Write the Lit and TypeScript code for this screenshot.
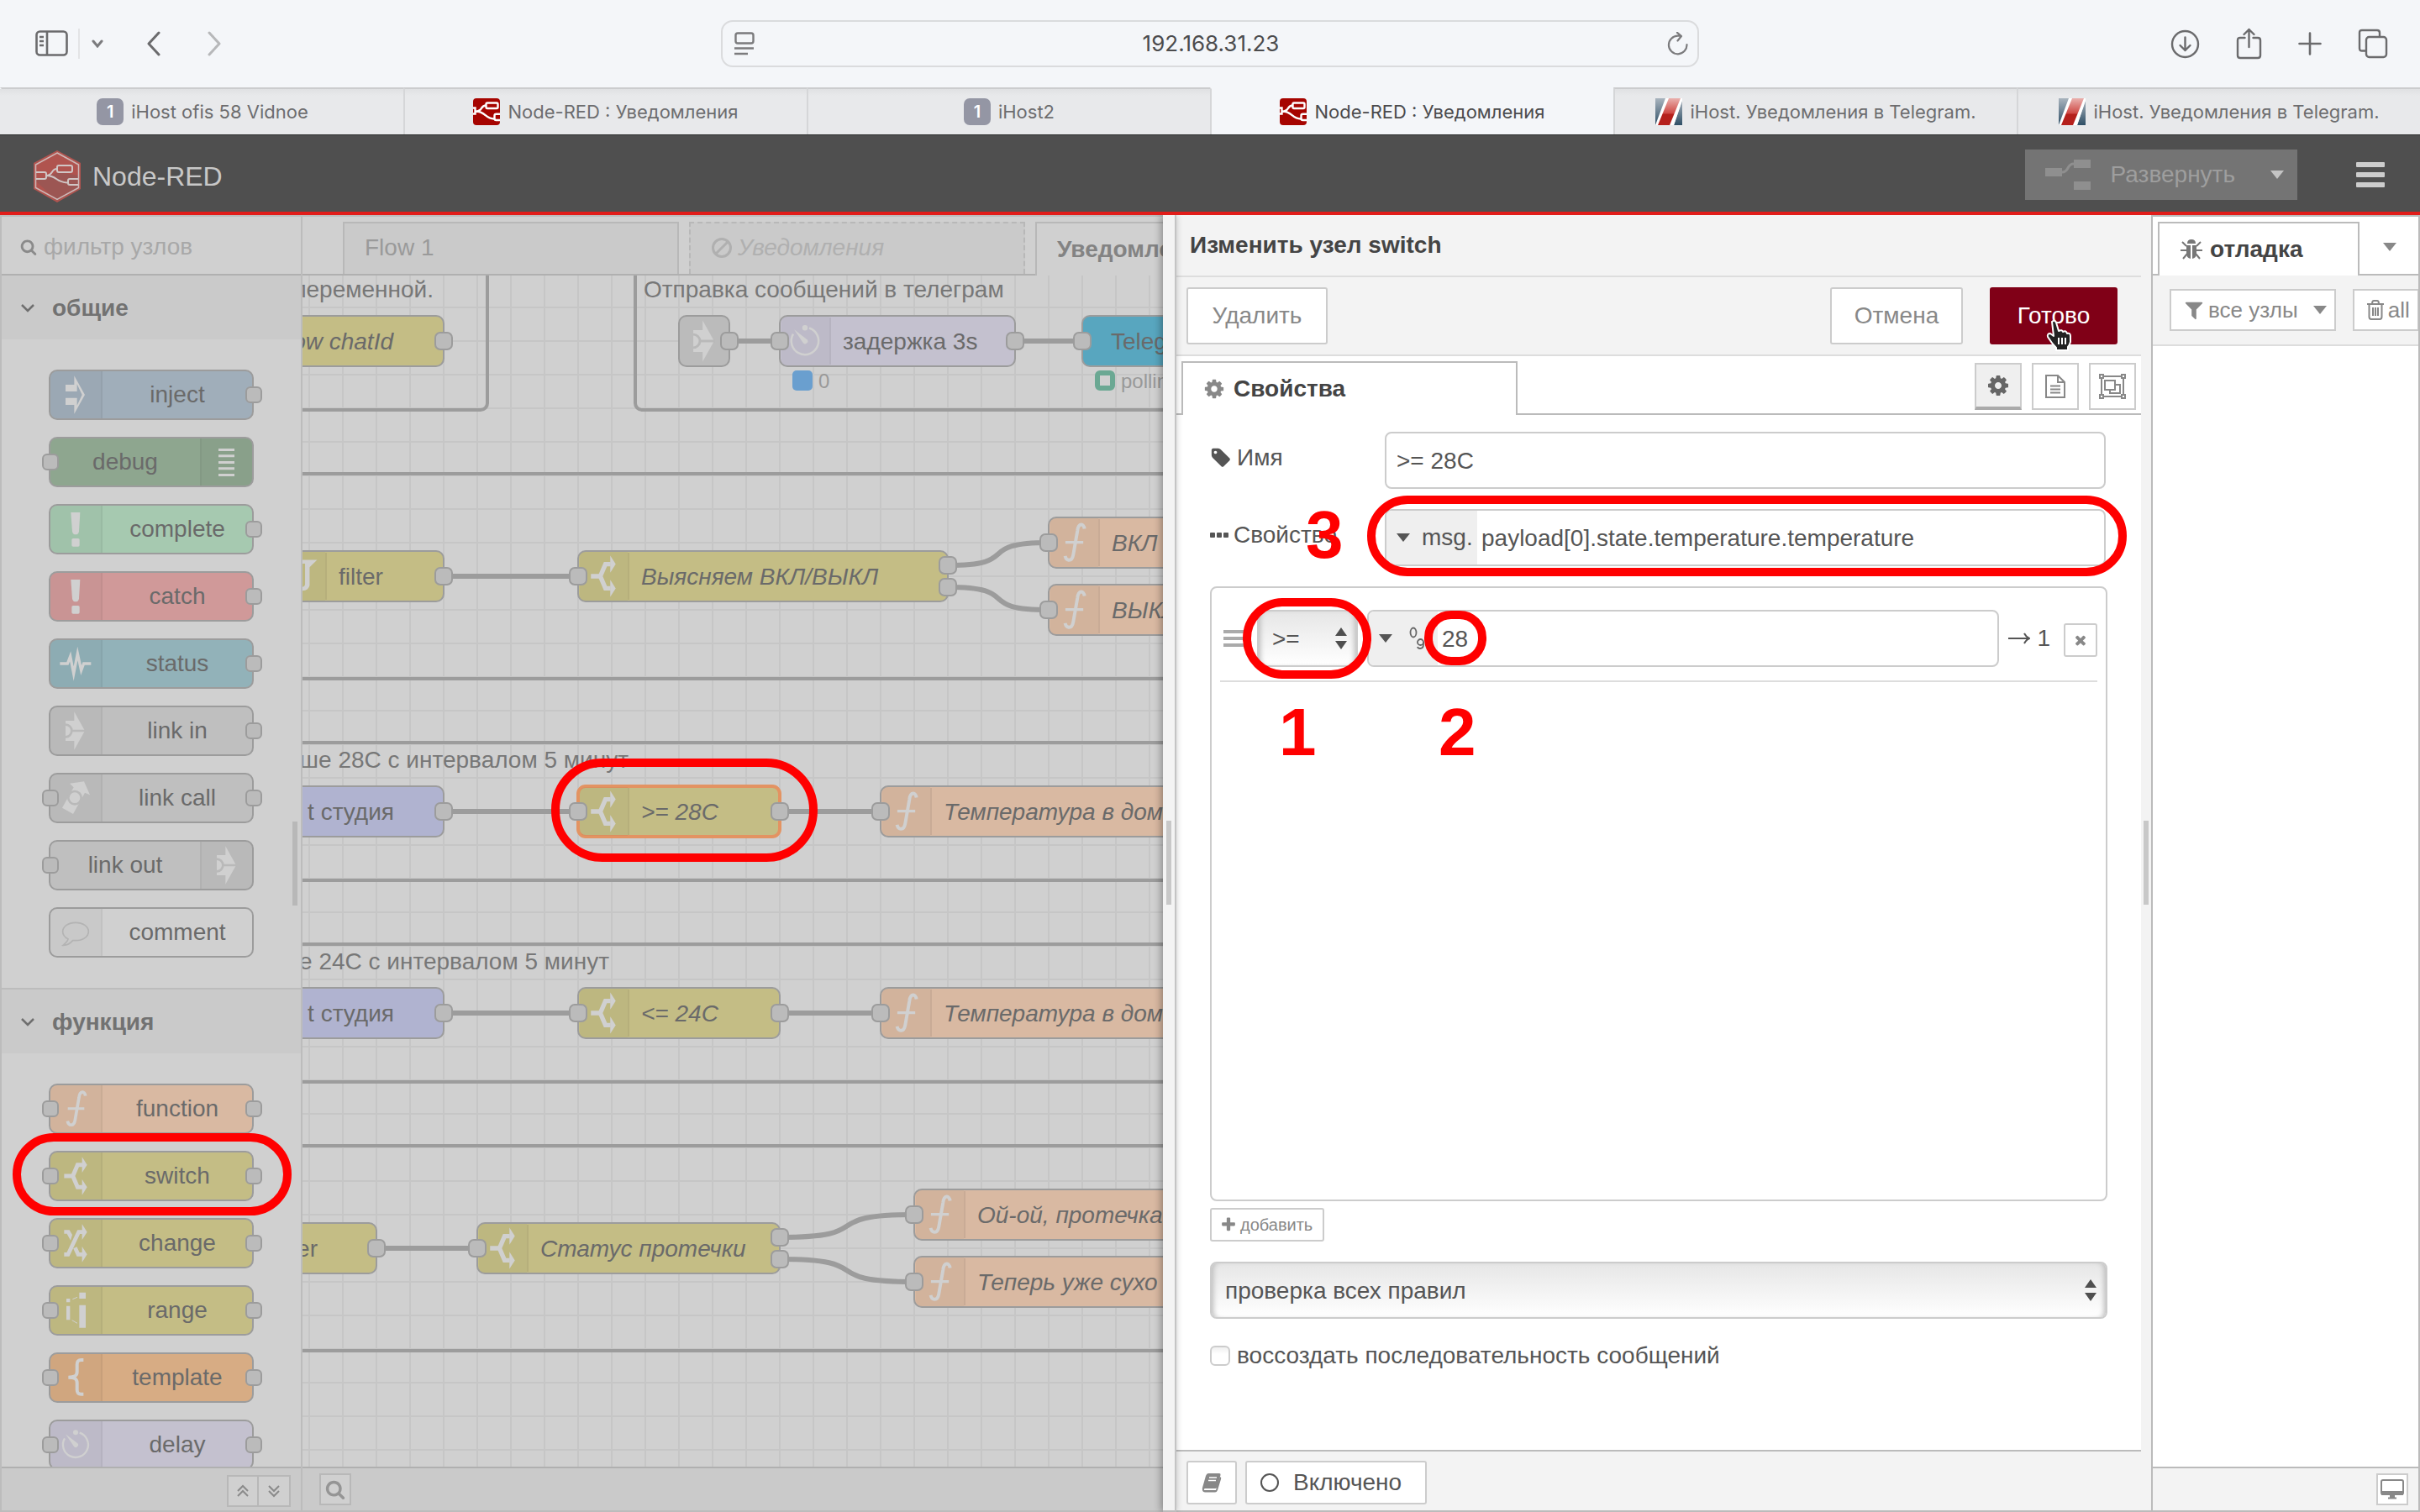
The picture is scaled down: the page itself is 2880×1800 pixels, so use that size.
import { LitElement, html, svg, css, nothing } from "lit";
import { customElement, property } from "lit/decorators.js";

const NODE_ICONS: Record<string, unknown> = {
  inject: svg`<path fill="#d0d0d0" fill-rule="evenodd" d="M-36-36H-5V-68L33 0L-5 68V36H-36V11H5V38L23 0L5-38V-12H-36Z"/>`,
  debug: svg`<path fill="#d0d0d0" d="M-30-48h57v9h-57zM-30-26h57v9h-57zM-30-3h57v9h-57zM-30 19h57v9h-57zM-30 42h57v9h-57z"/>`,
  alert: svg`<path fill="#d0d0d0" d="M-17-60H16L12 8Q10 19 0 19Q-10 19-12 8Z"/><rect fill="#d0d0d0" x="-14" y="33" width="28" height="29" rx="5"/>`,
  status: svg`<path fill="none" stroke="#d0d0d0" stroke-width="10" stroke-miterlimit="20" d="M-56 0H-29L-19-26L-7 36L7-36L20 24L29 0H55"/>`,
  link: svg`<path fill="#d0d0d0" d="M-5-68L33 0L-5 68V36H-36V-36H-5Z"/><path fill="none" stroke="#b9b9b9" stroke-width="8" d="M-36-22A22 22 0 0 1-36 22M-12 0H36"/>`,
  call: svg`<path fill="#d0d0d0" d="M-21-52L30-59L51-11L33-19L-9 57L-48 35L-7-38Z"/><circle cx="-3" cy="-1" r="23" fill="none" stroke="#b9b9b9" stroke-width="8"/>`,
  comment: svg`<path fill="none" stroke="#b3b3b3" stroke-width="5" d="M0-35C26-35 46-21 46-3S26 29 0 29L-10 29C-18 38-32 47-45 46C-38 40-27 30-27 23C-40 17-46 6-46-3C-46-21-26-35 0-35Z"/>`,
  function: svg`<path fill="none" stroke="#d0d0d0" stroke-width="11" d="M35-46C33-64 15-66 12-40L-2 40C-6 64-25 62-29 44"/><path stroke="#d0d0d0" stroke-width="9" d="M-28-1H31"/>`,
  switch: svg`<path fill="none" stroke="#d0d0d0" stroke-width="15" d="M-41 0H-10M24-40H7L-10 0L7 40H24"/><path fill="#d0d0d0" d="M23-68L41-40L23-12ZM23 12L41 40L23 68Z"/>`,
  change: svg`<path fill="none" stroke="#d0d0d0" stroke-width="14" d="M-41 40H-27L11-40H24M-2 16L9 40H24"/><path fill="#d0d0d0" d="M-41-47H-22L-12-30L-18-10L-31-34H-41ZM23-68L41-40L23-12ZM23 12L41 40L23 68Z"/>`,
  range: svg`<path fill="#d0d0d0" d="M-33-42h13v13h-13zM-33-16h13v50h-13zM13-64h23v22h-23zM13-19h23v81h-23z"/><path stroke="#d0d0d0" stroke-width="3" d="M-11-40L6-47M-13 35L6 46"/>`,
  template: svg`<path fill="none" stroke="#d0d0d0" stroke-width="12" d="M28-63H20C8-63 5-57 5-46V-20C5-6-4-1-26-1C-4-1 5 4 5 18V42C5 54 8 59 20 59H28"/>`,
  delay: svg`<path fill="none" stroke="#d0d0d0" stroke-width="7" d="M14-43A45 45 0 1 1-39-23"/><circle cx="0" cy="-44" r="9" fill="#d0d0d0"/><path fill="#d0d0d0" d="M-36-38L7-5A8 8 0 0 1-6 6Z"/>`,
  filter: svg`<path fill="#d0d0d0" d="M-50-54H54L29-30V30Q26 48 4 48V36Q14 34 14 26V-42H-50Z"/>`,
};

const FA: Record<string, string> = {
  cog: "M1152 896q0-106-75-181t-181-75-181 75-75 181 75 181 181 75 181-75 75-181zm512-109v222q0 12-8 23t-20 13l-185 28q-19 54-39 91 35 50 107 138 10 12 10 25t-9 23q-27 37-99 108t-94 71q-12 0-26-9l-138-108q-44 23-91 38-16 136-29 186-7 28-36 28h-222q-14 0-24.5-8.5t-11.5-21.5l-28-184q-49-16-90-37l-141 107q-10 9-25 9-14 0-25-11-126-114-165-168-7-10-7-23 0-12 8-23 15-21 51-66.5t54-70.5q-27-50-41-99l-183-27q-13-2-21-12.5t-8-23.5v-222q0-12 8-23t19-13l186-28q14-46 39-92-40-57-107-138-10-12-10-24 0-10 9-23 26-36 98.5-107.5t94.5-71.5q13 0 26 10l138 107q44-23 91-38 16-136 29-186 7-28 36-28h222q14 0 24.5 8.5t11.5 21.5l28 184q49 16 90 37l142-107q9-9 24-9 13 0 25 10 129 119 165 170 7 8 7 22 0 12-8 23-15 21-51 66.5t-54 70.5q26 50 41 98l183 28q13 2 21 12.5t8 23.5z",
  search: "M1216 832q0-185-131.5-316.5t-316.5-131.5-316.5 131.5-131.5 316.5 131.5 316.5 316.5 131.5 316.5-131.5 131.5-316.5zm512 832q0 52-38 90t-90 38q-54 0-90-38l-343-342q-179 124-399 124-143 0-273.5-55.5t-225-150-150-225-55.5-273.5 55.5-273.5 150-225 225-150 273.5-55.5 273.5 55.5 225 150 150 225 55.5 273.5q0 220-124 399l343 343q37 37 37 90z",
  tag: "M576 448q0-53-37.5-90.5t-90.5-37.5-90.5 37.5-37.5 90.5 37.5 90.5 90.5 37.5 90.5-37.5 37.5-90.5zm1067 576q0 53-37 90l-491 492q-39 37-91 37-53 0-90-37l-715-716q-38-37-64.5-101t-26.5-117v-416q0-52 38-90t90-38h416q53 0 117 26.5t102 64.5l715 714q37 39 37 91z",
  filter: "M1595 295q17 41-14 70l-493 493v742q0 42-39 59-13 5-25 5-27 0-45-19l-256-256q-19-19-19-45v-486l-493-493q-31-29-14-70 17-39 59-39h1280q42 0 59 39z",
  plus: "M1600 736v192q0 40-28 68t-68 28h-416v416q0 40-28 68t-68 28h-192q-40 0-68-28t-28-68v-416h-416q-40 0-68-28t-28-68v-192q0-40 28-68t68-28h416v-416q0-40 28-68t68-28h192q40 0 68 28t28 68v416h416q40 0 68 28t28 68z",
  times: "M1490 1322q0 40-28 68l-136 136q-28 28-68 28t-68-28l-294-294-294 294q-28 28-68 28t-68-28l-136-136q-28-28-28-68t28-68l294-294-294-294q-28-28-28-68t28-68l136-136q28-28 68-28t68 28l294 294 294-294q28-28 68-28t68 28l136 136q28 28 28 68t-28 68l-294 294 294 294q28 28 28 68z",
};

const fa = (name: string, size: number) =>
  html`<svg class="ico" width=${size} height=${size} viewBox="0 0 1792 1792" fill="currentColor" aria-hidden="true"><path d=${FA[name]}></path></svg>`;

const caret = () =>
  html`<svg class="ico" width="16" height="10" viewBox="0 0 16 10" fill="currentColor" aria-hidden="true"><path d="M0 0H16L8 10Z"/></svg>`;

const updown = () =>
  html`<svg class="updown" width="14" height="26" viewBox="0 0 14 26" fill="#4f4f4f" aria-hidden="true"><path d="M7 0L14 10H0ZM0 16H14L7 26Z"/></svg>`;

const baseStyles = css`
  * { box-sizing: border-box; }
  button, input, select { font: inherit; color: inherit; margin: 0; padding: 0; border: 0; background: none; border-radius: 0; outline: none; }
  svg { display: block; flex: none; }
  p, h1, h2, ul, ol { margin: 0; padding: 0; font: inherit; list-style: none; }
`;

interface Tab { icon: string; title: string; active?: boolean }

@customElement("browser-chrome")
export class BrowserChrome extends LitElement {
  static styles = [baseStyles, css`
    :host { display: block; background: #f4f6f9; color: #6b6b6d; font-family: Inter, "Noto Sans", sans-serif; }
    .bar { display: grid; grid-template-columns: 1fr 1164px 1fr; height: 104px; align-items: center; }
    .left { display: flex; align-items: center; padding-left: 42px; }
    .left .rule { width: 2px; height: 36px; background: #e3e4e6; margin: 0 14px 0 12px; }
    .left .back { margin: 0 56px 0 52px; }
    .address { display: flex; align-items: center; height: 56px; padding: 0 10px 0 14px; border: 2px solid #dadbdd; border-radius: 14px; }
    .address input { flex: 1; min-width: 0; text-align: center; font-size: 26px; color: #4b4b4d; }
    .right { display: flex; justify-content: flex-end; align-items: center; gap: 43px; padding-right: 38px; }
    .tabs { display: grid; grid-template-columns: repeat(6, 1fr); height: 56px; }
    .tab { display: flex; align-items: center; justify-content: center; gap: 9px; font-size: 22px; color: #6d6d6f; text-decoration: none; white-space: nowrap;
      background: linear-gradient(#e0e1e3, #e8e9eb 8px); border-top: 2px solid #cbccce; border-left: 2px solid #d5d6d8; }
    .tab:first-child { border-left-color: transparent; }
    .tab.active { background: #f4f6f9; border-top-color: transparent; color: #4b4b4d; }
    .one { width: 32px; height: 32px; border-radius: 7px; background: #9496a4; color: #fff; display: grid; place-items: center; font-size: 20px; font-weight: 600; }
  `];

  private tabs: Tab[] = [
    { icon: "one", title: "iHost ofis 58 Vidnoe" },
    { icon: "red", title: "Node-RED : Уведомления" },
    { icon: "one", title: "iHost2" },
    { icon: "red", title: "Node-RED : Уведомления", active: true },
    { icon: "stripe", title: "iHost. Уведомления в Telegram." },
    { icon: "stripe", title: "iHost. Уведомления в Telegram." },
  ];

  private favicon(kind: string) {
    if (kind === "one") return html`<span class="one">1</span>`;
    if (kind === "red") return html`<svg width="32" height="32" viewBox="0 0 32 32"><rect width="32" height="32" rx="4" fill="#a60400"/>
      <g fill="none" stroke="#fff" stroke-width="2.4"><path d="M0 11.500H2.500V18.500H0M3 15.500C12 15.500 8 8.500 15.500 8.500M3 15.500C15 15.500 14 24 25 24.500"/><rect x="15.500" y="5.500" width="14" height="6.500" rx="1.500"/><path d="M32 18.800H27.500Q25.500 18.800 25.500 20.500V24Q25.500 26 27.500 26H32"/></g></svg>`;
    return html`<svg width="32" height="32" viewBox="0 0 32 32"><defs><linearGradient id="sr" x1="0" y1="0" x2="0" y2="1"><stop offset="0" stop-color="#eab1ae"/><stop offset=".55" stop-color="#cf4a46"/><stop offset=".6" stop-color="#b5201c"/><stop offset="1" stop-color="#b5201c"/></linearGradient>
      <linearGradient id="sb" x1="0" y1="0" x2="0" y2="1"><stop offset="0" stop-color="#a9b4be"/><stop offset="1" stop-color="#2f4f66"/></linearGradient></defs>
      <path fill="url(#sb)" d="M0 0H13L2 32H0Z"/><path fill="url(#sb)" d="M32 2V32H22Z"/><path fill="#fff" d="M12 0H32V3L22 32H0Z"/><path fill="url(#sr)" d="M16 0H30L17 32H3Z"/></svg>`;
  }

  render() {
    return html`
      <div class="bar">
        <div class="left">
          <button aria-label="Боковая панель"><svg width="39" height="32" viewBox="0 0 39 32" fill="none" stroke="#6b6b6d" stroke-width="2.600"><rect x="1.500" y="1.500" width="36" height="28" rx="4"/><path d="M14 1.500V29.500M5 8H10M5 13H10M5 18H10"/></svg></button>
          <span class="rule"></span>
          <button aria-label="Меню"><svg width="14" height="10" viewBox="0 0 14 10" fill="none" stroke="#7b7b7e" stroke-width="3" stroke-linecap="round"><path d="M2 2L7 8L12 2"/></svg></button>
          <button class="back" aria-label="Назад"><svg width="16" height="30" viewBox="0 0 16 30" fill="none" stroke="#6b6b6d" stroke-width="3" stroke-linecap="round" stroke-linejoin="round"><path d="M14 2L2 15L14 28"/></svg></button>
          <button aria-label="Вперёд"><svg width="16" height="30" viewBox="0 0 16 30" fill="none" stroke="#b7b8ba" stroke-width="3" stroke-linecap="round" stroke-linejoin="round"><path d="M2 2L14 15L2 28"/></svg></button>
        </div>
        <div class="address">
          <svg width="24" height="28" viewBox="0 0 24 28" fill="none" stroke="#7b7b7d" stroke-width="2.400"><rect x="1.500" y="1.500" width="21" height="12" rx="2.500"/><path d="M0 19.500H23M0 26H16"/></svg>
          <input type="text" aria-label="Адрес" value="192.168.31.23">
          <button aria-label="Обновить"><svg width="26" height="28" viewBox="0 0 26 28" fill="none" stroke="#7b7b7d" stroke-width="2.200" stroke-linecap="round" stroke-linejoin="round"><path d="M23.500 15A10.800 10.800 0 1 1 12.700 4.700H16M12 .8L17 5L12.500 10.500"/></svg></button>
        </div>
        <div class="right">
          <button aria-label="Загрузки"><svg width="35" height="35" viewBox="0 0 35 35" fill="none" stroke="#6b6b6d" stroke-width="2.400" stroke-linecap="round" stroke-linejoin="round"><circle cx="17.500" cy="17.500" r="15.500"/><path d="M17.500 9.500V25M11.500 19L17.500 25L23.500 19"/></svg></button>
          <button aria-label="Поделиться"><svg width="31" height="38" viewBox="0 0 31 38" fill="none" stroke="#6b6b6d" stroke-width="2.400" stroke-linecap="round" stroke-linejoin="round"><path d="M10.500 12H5Q2 12 2 15V33Q2 36 5 36H26Q29 36 29 33V15Q29 12 26 12H20.500M15.500 23V2M9.500 8L15.500 2L21.500 8"/></svg></button>
          <button aria-label="Новая вкладка"><svg width="28" height="28" viewBox="0 0 28 28" stroke="#6b6b6d" stroke-width="2.600" stroke-linecap="round"><path d="M14 1.500V26.500M1.500 14H26.500"/></svg></button>
          <button aria-label="Обзор вкладок"><svg width="36" height="36" viewBox="0 0 36 36" fill="none" stroke="#6b6b6d" stroke-width="2.400"><path d="M10 26.500H5Q2 26.500 2 23.500V5Q2 2 5 2H23Q26 2 26 5V10"/><rect x="10" y="10" width="24" height="24" rx="3.500"/></svg></button>
        </div>
      </div>
      <nav class="tabs">
        ${this.tabs.map(t => html`<a href="#" class="tab ${t.active ? "active" : ""}">${this.favicon(t.icon)}<span>${t.title}</span></a>`)}
      </nav>`;
  }
}

interface PaletteNode { label: string; icon: string; color: string; in?: boolean; out?: boolean; right?: boolean; marked?: boolean }

@customElement("palette-node")
export class PaletteNodeElement extends LitElement {
  @property({ attribute: false }) node!: PaletteNode;

  static styles = [baseStyles, css`
    :host { display: block; position: relative; margin: 0 56px; }
    .node { display: flex; height: 60px; border: 2px solid #9c9c9c; border-radius: 10px; overflow: hidden; color: #6a6a6a; }
    .node.right { flex-direction: row-reverse; }
    .icon { width: 62px; background: rgba(0, 0, 0, .03); border-right: 2px solid rgba(0, 0, 0, .04); display: grid; place-items: center; }
    .right .icon { border-right: 0; border-left: 2px solid rgba(0, 0, 0, .04); }
    .label { flex: 1; display: grid; place-items: center; }
    .port { position: absolute; top: 20px; width: 20px; height: 20px; border: 2px solid #9c9c9c; border-radius: 6px; background: #bbb; }
    .port.in { left: -8px; }
    .port.out { right: -10px; }
    .ring { position: absolute; inset: -21px -45px -17px -43px; border: 10px solid #f00; border-radius: 49px; z-index: 2; }
  `];

  render() {
    const n = this.node;
    return html`
      <div class="node ${n.right ? "right" : ""}" style="background:${n.color}">
        <span class="icon"><svg width="56" height="56" viewBox="-84 -84 168 168">${NODE_ICONS[n.icon]}</svg></span>
        <span class="label">${n.label}</span>
      </div>
      ${n.in ? html`<span class="port in"></span>` : nothing}
      ${n.out ? html`<span class="port out"></span>` : nothing}
      ${n.marked ? html`<span class="ring"></span>` : nothing}`;
  }
}

@customElement("node-palette")
export class NodePalette extends LitElement {
  static styles = [baseStyles, css`
    :host { display: flex; flex-direction: column; min-height: 0; position: relative; background: #d0d0d0; border: 2px solid #bcbcbc; color: #727272; }
    .search { display: flex; align-items: center; gap: 8px; height: 70px; flex: none; padding: 4px 20px 0 22px; border-bottom: 2px solid #b0b0b0; color: #8a8a8a; }
    .search input { flex: 1; min-width: 0; font-size: 28px; height: 40px; }
    .search input::placeholder { color: #a8a8a8; opacity: 1; }
    .list { flex: 1; min-height: 0; overflow: hidden; }
    .group + .group { border-top: 2px solid #bcbcbc; }
    .head { display: flex; align-items: center; gap: 20px; width: 100%; height: 76px; padding: 2px 22px 0; background: #cacaca; font-weight: bold; }
    .nodes { display: flex; flex-direction: column; gap: 20px; padding: 36px 0; }
    .foot { flex: none; height: 52px; border-top: 2px solid #b0b0b0; background: #cacaca; display: flex; justify-content: flex-end; align-items: center; padding: 4px 12px 0; color: #8a8a8a; }
    .foot button { width: 38px; height: 38px; border: 2px solid #b8b8b8; background: #d0d0d0; display: grid; place-items: center; }
    .foot button + button { width: 40px; margin-left: -2px; }
    .grip { position: absolute; right: 4px; top: calc(50% - 50px); width: 6px; height: 100px; background: #b8b8b8; }
    .ico { flex: none; }
  `];

  private groups: { title: string; nodes: PaletteNode[] }[] = [
    { title: "общие", nodes: [
      { label: "inject", icon: "inject", color: "#a0aeba", out: true },
      { label: "debug", icon: "debug", color: "#8ea68f", in: true, right: true },
      { label: "complete", icon: "alert", color: "#a6c9b0", out: true },
      { label: "catch", icon: "alert", color: "#d09999", out: true },
      { label: "status", icon: "status", color: "#92b2b9", out: true },
      { label: "link in", icon: "link", color: "#bfbfbf", out: true },
      { label: "link call", icon: "call", color: "#bfbfbf", in: true, out: true },
      { label: "link out", icon: "link", color: "#bfbfbf", in: true, right: true },
      { label: "comment", icon: "comment", color: "#d0d0d0" },
    ] },
    { title: "функция", nodes: [
      { label: "function", icon: "function", color: "#d9b9a2", in: true, out: true },
      { label: "switch", icon: "switch", color: "#c4bd85", in: true, out: true, marked: true },
      { label: "change", icon: "change", color: "#c4bd85", in: true, out: true },
      { label: "range", icon: "range", color: "#c4bd85", in: true, out: true },
      { label: "template", icon: "template", color: "#d7ac84", in: true, out: true },
      { label: "delay", icon: "delay", color: "#c4c1cf", in: true, out: true },
    ] },
  ];

  render() {
    return html`
      <label class="search">${fa("search", 20)}<input type="text" placeholder="фильтр узлов"></label>
      <div class="list">
        ${this.groups.map(g => html`<section class="group">
          <button class="head"><svg width="18" height="12" viewBox="0 0 18 12" fill="none" stroke="#6f6f6f" stroke-width="2.500"><path d="M2 2L9 9L16 2"/></svg>${g.title}</button>
          <div class="nodes">${g.nodes.map(n => html`<palette-node .node=${n}></palette-node>`)}</div>
        </section>`)}
      </div>
      <div class="foot">
        <button aria-label="Свернуть все"><svg width="14" height="16" viewBox="0 0 14 16" fill="none" stroke="currentColor" stroke-width="2"><path d="M1 8L7 2L13 8M1 14L7 8L13 14"/></svg></button>
        <button aria-label="Развернуть все"><svg width="14" height="16" viewBox="0 0 14 16" fill="none" stroke="currentColor" stroke-width="2"><path d="M1 2L7 8L13 2M1 8L7 14L13 8"/></svg></button>
      </div>
      <span class="grip"></span>`;
  }
}

interface FlowNode { x: number; y: number; w: number; color: string; icon?: string; label?: string; labelX?: number; end?: boolean; italic?: boolean; in?: boolean; outs?: number; selected?: boolean }

const OLIVE = "#c4bd85", PEACH = "#d9b9a2", INDIGO = "#b0b3d0";

@customElement("flow-workspace")
export class FlowWorkspace extends LitElement {
  static styles = [baseStyles, css`
    :host { display: flex; flex-direction: column; min-width: 0; min-height: 0; overflow: hidden; background: #d0d0d0; border-top: 2px solid #bcbcbc; border-bottom: 2px solid #bcbcbc; }
    .tabs { display: flex; gap: 12px; height: 70px; flex: none; padding: 6px 0 0 48px; background: linear-gradient(#b0b0b0, #b0b0b0) bottom / 100% 2px no-repeat; }
    .tab { display: flex; align-items: center; gap: 6px; flex: none; width: 400px; height: 62px; padding: 0 24px 2px; border: 2px solid #b8b8b8; border-bottom: 0; background: #cacaca; color: #9a9a9a; text-decoration: none; }
    .tab.off { border-style: dashed; font-style: italic; color: #b0b0b0; }
    .tab.on { height: 64px; padding-bottom: 0; background: #d0d0d0; color: #838383; font-weight: bold; }
    .canvas { flex: 1; min-height: 0; width: 100%; font-size: 28px; }
    .label { fill: #6a6a6a; }
    .it { font-style: italic; }
    .cap { fill: #777; }
    .status { fill: #999; font-size: 24px; }
    .foot { flex: none; height: 52px; border-top: 2px solid #b0b0b0; background: #cacaca; padding: 6px 20px; }
    .foot button { width: 38px; height: 38px; border: 2px solid #b8b8b8; background: #d0d0d0; color: #959595; display: grid; place-items: center; }
  `];

  private nodes: FlowNode[] = [
    { x: -200, y: 48, w: 368, color: OLIVE, label: "flow chatId", labelX: 108, end: true, italic: true, outs: 1 },
    { x: 448, y: 48, w: 60, color: "#bbb", icon: "link", outs: 1 },
    { x: 568, y: 48, w: 280, color: "#c4c1cf", icon: "delay", label: "задержка 3s", in: true, outs: 1 },
    { x: 928, y: 48, w: 300, color: "#58a6bf", label: "Telegram", labelX: 962, in: true },
    { x: -32, y: 328, w: 200, color: OLIVE, icon: "filter", label: "filter", outs: 1 },
    { x: 328, y: 328, w: 440, color: OLIVE, icon: "switch", label: "Выясняем ВКЛ/ВЫКЛ", italic: true, in: true, outs: 2 },
    { x: 888, y: 288, w: 300, color: PEACH, icon: "function", label: "ВКЛ", italic: true, in: true },
    { x: 888, y: 368, w: 300, color: PEACH, icon: "function", label: "ВЫКЛ", italic: true, in: true },
    { x: -200, y: 608, w: 368, color: INDIGO, label: "t студия", labelX: 109, end: true, outs: 1 },
    { x: 328, y: 608, w: 240, color: OLIVE, icon: "switch", label: ">= 28C", italic: true, in: true, outs: 1, selected: true },
    { x: 688, y: 608, w: 500, color: PEACH, icon: "function", label: "Температура в доме", italic: true, in: true },
    { x: -200, y: 848, w: 368, color: INDIGO, label: "t студия", labelX: 109, end: true, outs: 1 },
    { x: 328, y: 848, w: 240, color: OLIVE, icon: "switch", label: "<= 24C", italic: true, in: true, outs: 1 },
    { x: 688, y: 848, w: 500, color: PEACH, icon: "function", label: "Температура в доме", italic: true, in: true },
    { x: -200, y: 1128, w: 288, color: OLIVE, label: "filter", labelX: 18, end: true, outs: 1 },
    { x: 208, y: 1128, w: 360, color: OLIVE, icon: "switch", label: "Статус протечки", italic: true, in: true, outs: 2 },
    { x: 728, y: 1088, w: 500, color: PEACH, icon: "function", label: "Ой-ой, протечка", italic: true, in: true },
    { x: 728, y: 1168, w: 500, color: PEACH, icon: "function", label: "Теперь уже сухо", italic: true, in: true },
  ];

  private wires: [number, number, number, number][] = [
    [508, 78, 568, 78], [848, 78, 928, 78],
    [168, 358, 328, 358], [768, 345, 888, 318], [768, 371, 888, 398],
    [168, 638, 328, 638], [568, 638, 688, 638],
    [168, 878, 328, 878], [568, 878, 688, 878],
    [88, 1158, 208, 1158], [568, 1145, 728, 1118], [568, 1171, 728, 1198],
  ];

  private port(x: number, y: number) {
    return svg`<rect x=${x - 10} y=${y - 10} width="20" height="20" rx="6" fill="#bbb" stroke="#9c9c9c" stroke-width="2"/>`;
  }

  private drawNode(n: FlowNode) {
    const outs = n.outs === 2 ? [17, 43] : n.outs ? [30] : [];
    return svg`<g transform="translate(${n.x} ${n.y})">
      <rect width=${n.w} height="60" rx="9" fill=${n.color} stroke=${n.selected ? "#e39362" : "#9c9c9c"} stroke-width=${n.selected ? 4 : 2}/>
      ${n.icon ? svg`${n.w > 60 ? svg`<path d="M59 1H8Q2 1 2 8V52Q2 59 8 59H59Z" fill="rgba(0,0,0,.03)"/><path d="M60 2V58" stroke="rgba(0,0,0,.07)" stroke-width="2"/>` : nothing}<g transform="translate(30 30) scale(.36)">${NODE_ICONS[n.icon]}</g>` : nothing}
      ${n.label ? svg`<text class="label ${n.italic ? "it" : ""}" x=${n.labelX !== undefined ? n.labelX - n.x : 75} y="40" text-anchor=${n.end ? "end" : "start"}>${n.label}</text>` : nothing}
      ${n.in ? this.port(0, 30) : nothing}${outs.map(y => this.port(n.w, y))}
    </g>`;
  }

  render() {
    return html`
      <nav class="tabs">
        <a class="tab" href="#">Flow 1</a>
        <a class="tab off" href="#"><svg width="26" height="26" viewBox="0 0 26 26" fill="none" stroke="currentColor" stroke-width="3"><circle cx="13" cy="13" r="10.500"/><path d="M20 6L6 20"/></svg>Уведомления</a>
        <a class="tab on" href="#">Уведомления</a>
      </nav>
      <svg class="canvas">
        <defs><pattern id="grid" x="7" y="37" width="40" height="40" patternUnits="userSpaceOnUse"><path d="M1 0V40M0 1H40" stroke="#c6c6c6" stroke-width="2"/></pattern></defs>
        <rect width="100%" height="100%" fill="url(#grid)"/>
        <g fill="none" stroke="#9c9c9c" stroke-width="4">
          <rect x="-100" y="-60" width="320" height="220" rx="8"/>
          <rect x="396" y="-60" width="900" height="220" rx="8"/>
          <rect x="-100" y="236" width="1500" height="244" rx="8"/>
          <rect x="-100" y="556" width="1500" height="164" rx="8"/>
          <rect x="-100" y="796" width="1500" height="164" rx="8"/>
          <rect x="-100" y="1036" width="1500" height="244" rx="8"/>
        </g>
        <text class="cap" x="156" y="26" text-anchor="end">переменной.</text>
        <text class="cap" x="406" y="26">Отправка сообщений в телеграм</text>
        <text class="cap" x="388" y="586" text-anchor="end">ше 28C с интервалом 5 минут</text>
        <text class="cap" x="365" y="826" text-anchor="end">е 24C с интервалом 5 минут</text>
        ${this.wires.map(([a, b, c, d]) => svg`<path fill="none" stroke="#9c9c9c" stroke-width="6" d="M${a} ${b}C${a + (c - a) * 0.75} ${b} ${c - (c - a) * 0.75} ${d} ${c} ${d}"/>`)}
        ${this.nodes.map(n => this.drawNode(n))}
        <rect x="583" y="113" width="24" height="24" rx="5" fill="#6a9fcf"/>
        <text class="status" x="614" y="134">0</text>
        <rect x="946" y="116" width="18" height="18" rx="3" fill="none" stroke="#6ba893" stroke-width="6"/>
        <text class="status" x="974" y="134">polling</text>
        <rect x="301" y="580" width="307" height="113" rx="56" fill="none" stroke="#f00" stroke-width="10"/>
      </svg>
      <div class="foot"><button aria-label="Поиск">${fa("search", 24)}</button></div>`;
  }
}

@customElement("edit-tray")
export class EditTray extends LitElement {
  static styles = [baseStyles, css`
    :host { display: flex; flex-direction: column; min-width: 0; min-height: 0; background: #fff; color: #555; border-bottom: 2px solid #bbb; }
    h1 { height: 74px; flex: none; display: flex; align-items: center; padding: 0 16px; background: #f3f3f3; border-bottom: 2px solid #ddd; font-weight: bold; color: #444; }
    .actions { flex: none; display: flex; align-items: center; height: 94px; padding: 0 28px 0 12px; background: #f3f3f3; border-bottom: 2px solid #ddd; color: #888; }
    .btn { display: inline-flex; align-items: center; justify-content: center; background: #fff; border: 2px solid #ccc; border-radius: 3px; }
    .actions .btn { height: 68px; width: 158px; }
    .actions .delete { width: 168px; margin-right: auto; }
    .actions .done { position: relative; width: 152px; margin-left: 32px; background: #800017; border-color: #800017; color: #fff; }
    .hand { position: absolute; left: 64px; top: 36px; }
    .tabs { display: flex; flex: none; height: 70px; padding: 6px 6px 0; background: linear-gradient(#bbb, #bbb) bottom / 100% 2px no-repeat; }
    .tab { display: flex; align-items: center; gap: 10px; width: 400px; height: 64px; padding: 0 24px; margin-right: auto; border: 2px solid #bbb; border-bottom: 0; background: #fff; font-weight: bold; color: #444; text-decoration: none; }
    .tab .ico { color: #888; }
    .sq { width: 56px; height: 56px; margin: 2px 0 0 12px; background: #fff; border: 2px solid #ccc; color: #888; display: grid; place-items: center; }
    .sq.on { background: #efefef; border-bottom: 4px solid #aaa; color: #666; }
    .form { flex: 1; min-height: 0; display: flex; flex-direction: column; padding: 20px 40px 100px; }
    .row { position: relative; display: flex; margin: 0 2px 24px 0; }
    .row > label { width: 208px; height: 62px; display: flex; align-items: center; gap: 6px; }
    .text { flex: 1; height: 68px; padding: 2px 12px 0; border: 2px solid #ccc; border-radius: 8px; background: #fff; min-width: 0; }
    .typed { position: relative; flex: 1; display: flex; height: 68px; border: 2px solid #ccc; border-radius: 8px; }
    .typed .type { display: flex; align-items: center; gap: 14px; padding: 0 4px 0 12px; width: 108px; background: #efefef; border-radius: 6px 0 0 6px; }
    .typed .type.num { width: 82px; gap: 20px; }
    .typed input { flex: 1; min-width: 0; padding: 2px 5px 0; border-radius: 0 6px 6px 0; }
    .ring { position: absolute; border: 10px solid #f00; border-radius: 48px; z-index: 3; pointer-events: none; }
    .typed .ring.prop { inset: -18px -27px -14px -23px; }
    .typed .ring.val { left: 66px; top: -1px; width: 74px; height: 65px; border-radius: 32px; }
    .op .ring { inset: -14px -16px -14px -17px; }
    .mark { position: absolute; z-index: 4; color: #f00; font-size: 80px; line-height: 80px; font-weight: bold; }
    .mark.m1 { left: 80px; top: 132px; }
    .mark.m2 { left: 270px; top: 132px; }
    .mark.m3 { left: 114px; top: -9px; }
    .rules { position: relative; flex: 1; min-height: 200px; border: 2px solid #ccc; border-radius: 8px; padding: 26px 10px; }
    .rule { display: flex; align-items: center; padding: 0 0 16px 4px; border-bottom: 2px solid #ddd; }
    .op { position: relative; width: 120px; height: 68px; margin: 0 11px 0 14px; }
    select { appearance: none; width: 100%; height: 68px; padding: 2px 16px 0; border: 2px solid #ccc; border-radius: 8px; box-shadow: inset 6px 0 6px -4px #bbb, inset -6px 0 6px -4px #bbb; background: linear-gradient(#e6e6e6, #fff); }
    .updown { position: absolute; right: 13px; top: 21px; pointer-events: none; }
    .out { display: flex; align-items: center; gap: 8px; margin: 0 16px 0 11px; }
    .del { width: 40px; height: 40px; margin-top: 4px; color: #888; }
    .add { align-self: flex-start; height: 40px; margin: 8px 0 24px; padding: 0 12px 0 10px; gap: 4px; font-size: 20px; color: #888; }
    .mode { position: relative; margin-bottom: 32px; }
    .check { display: flex; align-items: center; gap: 8px; height: 24px; }
    .check input { appearance: none; width: 24px; height: 24px; border: 2px solid #ccc; border-radius: 6px; background: linear-gradient(#f0f0f0, #fff 8px); }
    .foot { flex: none; display: flex; align-items: center; gap: 10px; height: 72px; padding: 4px 12px 0; background: #f3f3f3; border-top: 2px solid #bbb; }
    .foot .btn { height: 52px; gap: 16px; padding: 0 28px 0 15px; }
    .foot .btn.book { width: 60px; padding: 0; color: #888; }
  `];

  render() {
    return html`
      <h1>Изменить узел switch</h1>
      <div class="actions">
        <button class="btn delete">Удалить</button>
        <button class="btn">Отмена</button>
        <button class="btn done">Готово
          <svg class="hand" width="32" height="38" viewBox="0 0 32 38"><path fill="#222" stroke="#fff" stroke-width="2" stroke-linejoin="round" d="M8 3Q11 0 13 4L16 14Q20 12 21 15Q25 13 26 17Q30 16 30 20V27Q29 31 27 33V37H13V34Q8 29 3 21Q2 17 6 17L10 20Z"/><path stroke="#fff" stroke-width="2" d="M16 22V30M20 22V30M24 22V30"/></svg>
        </button>
      </div>
      <nav class="tabs">
        <a class="tab" href="#">${fa("cog", 26)}Свойства</a>
        <button class="sq on" aria-label="Свойства">${fa("cog", 28)}</button>
        <button class="sq" aria-label="Описание"><svg width="26" height="30" viewBox="0 0 26 30" fill="none" stroke="currentColor" stroke-width="2"><path d="M2 2H16L24 10V28H2ZM16 2V10H24M7 14.500H19M7 18.500H19M7 22.500H19"/></svg></button>
        <button class="sq" aria-label="Внешний вид"><svg width="32" height="30" viewBox="0 0 32 30" fill="none" stroke="currentColor" stroke-width="2"><path d="M3 3H29V27H3Z"/><path d="M7 8H19V19H7ZM19 13H25V23H13V19"/><g fill="#fff"><rect x="1" y="1" width="4" height="4"/><rect x="27" y="1" width="4" height="4"/><rect x="1" y="25" width="4" height="4"/><rect x="27" y="25" width="4" height="4"/></g></svg></button>
      </nav>
      <div class="form">
        <div class="row">
          <label for="name">${fa("tag", 26)}Имя</label>
          <input id="name" class="text" type="text" value=">= 28C">
        </div>
        <div class="row">
          <label for="prop"><svg width="22" height="6" viewBox="0 0 22 6" fill="#555"><rect width="6" height="6" rx="1"/><rect x="8" width="6" height="6" rx="1"/><rect x="16" width="6" height="6" rx="1"/></svg>Свойство</label>
          <div class="typed">
            <button class="type">${caret()}msg.</button>
            <input id="prop" type="text" value="payload[0].state.temperature.temperature">
            <span class="ring prop"></span>
          </div>
          <span class="mark m3">3</span>
        </div>
        <div class="rules">
          <ol>
            <li class="rule">
              <svg width="26" height="20" viewBox="0 0 26 20" fill="#aaa"><path d="M0 0H26V4H0ZM0 8H26V12H0ZM0 16H26V20H0Z"/></svg>
              <div class="op"><select aria-label="Оператор"><option>&gt;=</option></select>${updown()}<span class="ring"></span></div>
              <div class="typed">
                <button class="type num" aria-label="Тип значения: число">${caret()}<svg width="20" height="28" viewBox="0 0 20 28" fill="none" stroke="#666" stroke-width="1.800"><ellipse cx="5" cy="7" rx="3.500" ry="5.500"/><circle cx="13.500" cy="18.500" r="3.500"/><path d="M17 18V21Q17 26 13 26Q10.500 26 10 24"/></svg></button>
                <input type="text" aria-label="Значение" value="28">
                <span class="ring val"></span>
              </div>
              <span class="out"><svg width="26" height="14" viewBox="0 0 26 14" fill="none" stroke="#555" stroke-width="2"><path d="M0 7H25M19 1Q21 5 25 7Q21 9 19 13"/></svg>1</span>
              <button class="btn del" aria-label="Удалить правило">${fa("times", 18)}</button>
            </li>
          </ol>
          <span class="mark m1">1</span>
          <span class="mark m2">2</span>
        </div>
        <button class="btn add">${fa("plus", 20)}добавить</button>
        <div class="mode"><select aria-label="Режим проверки"><option>проверка всех правил</option></select>${updown()}</div>
        <label class="check"><input type="checkbox">воссоздать последовательность сообщений</label>
      </div>
      <div class="foot">
        <button class="btn book" aria-label="Справка"><svg width="24" height="24" viewBox="0 0 24 24"><path fill="#888" d="M8 1H21Q23 1 22.500 3L18 18Q17.500 19 16 19H4Q2 19.500 3 21H17L22 5Q24 6 23 8L19 21Q18 23.500 16 23.500H4Q0 23 1 18L5 4Q6 1 8 1Z"/><path stroke="#fff" stroke-width="1.600" d="M9 6H18M8 9.500H17"/></svg></button>
        <button class="btn"><svg width="24" height="24" viewBox="0 0 24 24" fill="none" stroke="#555" stroke-width="2"><circle cx="12" cy="12" r="10"/></svg>Включено</button>
      </div>`;
  }
}

@customElement("debug-sidebar")
export class DebugSidebar extends LitElement {
  static styles = [baseStyles, css`
    :host { display: flex; flex-direction: column; min-width: 0; min-height: 0; overflow: hidden; background: #fff; border: 2px solid #bbb; color: #888; }
    .tabs { flex: none; display: flex; height: 70px; padding: 6px 0 0 6px; background: linear-gradient(#bbb, #bbb) bottom / 100% 2px no-repeat; }
    .tab { display: flex; align-items: center; gap: 8px; width: 240px; height: 64px; padding: 0 24px; border: 2px solid #bbb; border-bottom: 0; background: #fff; color: #444; font-weight: bold; text-decoration: none; }
    .tab svg { color: #777; }
    .more { flex: 1; display: grid; place-items: center; height: 60px; padding-left: 2px; }
    .tools { flex: none; display: flex; gap: 20px; height: 84px; padding: 16px 0 0 20px; background: #f3f3f3; border-bottom: 2px solid #ddd; font-size: 26px; }
    .tools button { flex: none; display: flex; align-items: center; height: 50px; gap: 4px; padding: 0 9px 0 14px; background: #fff; border: 2px solid #ccc; white-space: nowrap; }
    .tools button .ico:last-child { margin-left: 14px; }
    .body { flex: 1; }
    .foot { flex: none; height: 52px; display: flex; justify-content: flex-end; padding: 6px 12px; background: #f3f3f3; border-top: 2px solid #bbb; }
    .foot button { width: 38px; height: 38px; background: #fff; border: 2px solid #ccc; display: grid; place-items: center; }
  `];

  render() {
    return html`
      <nav class="tabs">
        <a class="tab" href="#"><svg width="28" height="26" viewBox="0 0 28 26" fill="currentColor"><path d="M9 6Q9 1 14 1Q19 1 19 6ZM8 8H13V24Q8 23 8 18ZM15 8H20V18Q20 23 15 24Z"/><path fill="none" stroke="currentColor" stroke-width="2" d="M3 4L8 9M25 4L20 9M1 14H8M20 14H27M4 24L9 18M24 24L19 18"/></svg>отладка</a>
        <button class="more" aria-label="Другие панели">${caret()}</button>
      </nav>
      <div class="tools">
        <button>${fa("filter", 26)}все узлы${caret()}</button>
        <button><svg width="22" height="24" viewBox="0 0 22 24" fill="none" stroke="currentColor" stroke-width="2"><path d="M1 5H21M7 5Q7 1 9 1H13Q15 1 15 5M3.500 5V20Q3.500 23 6 23H16Q18.500 23 18.500 20V5M8 9V19M11 9V19M14 9V19"/></svg>all</button>
      </div>
      <div class="body"></div>
      <div class="foot"><button aria-label="Открыть в новом окне"><svg width="28" height="24" viewBox="0 0 28 24" fill="none" stroke="currentColor" stroke-width="2"><rect x="1" y="1" width="26" height="17" rx="2"/><path fill="currentColor" d="M2 15H26V18H2ZM12 18H16V22H12Z"/><path d="M9 22.500H19"/></svg></button></div>`;
  }
}

@customElement("app-root")
export class AppRoot extends LitElement {
  static styles = [baseStyles, css`
    :host { display: grid; grid-template-rows: 160px 96px minmax(0, 1fr); height: 100vh; font-family: "Liberation Sans", Arial, sans-serif; font-size: 28px; line-height: 32px; background: #fff; }
    header { position: relative; z-index: 3; display: flex; align-items: center; padding: 2px 42px 0 40px; background: #4f4f4f; border-top: 1px solid #2c2e2d; border-bottom: 4px solid #e11d1a; color: #c8c8c8; }
    .brand { display: flex; align-items: center; gap: 14px; font-size: 32px; margin-right: auto; padding-top: 4px; }
    .deploy { display: flex; align-items: center; height: 60px; padding: 0 16px 0 24px; background: #747474; color: #9e9e9e; }
    .deploy .ico { color: #c4c4c4; margin-left: 42px; }
    .deploy > svg:first-child { margin-right: 23px; }
    .menu { margin-left: 70px; }
    main { display: grid; grid-template-columns: 360px minmax(0, 1fr) 16px 1148px 12px 320px; min-height: 0; overflow: hidden; }
    .split { display: grid; place-items: center; background: #f3f3f3; border-bottom: 2px solid #bbb; }
    .split.left { position: relative; z-index: 2; border-right: 2px solid #c4c4c4; box-shadow: -2px 0 10px rgba(0, 0, 0, .35); }
    .split i { width: 6px; height: 100px; background: #c8c8c8; }
  `];

  render() {
    return html`
      <browser-chrome></browser-chrome>
      <header>
        <div class="brand">
          <svg width="56" height="62" viewBox="0 0 56 62"><path fill="#b0544f" d="M28 0L56 15V46L28 62L0 46V15Z"/><path fill="#9c5653" d="M2 36L28 60L54 45V30L30 26Z"/><path fill="none" stroke="#cdb9b8" stroke-width="1.500" d="M28 3L53.500 17V44.500L28 58.500L2.500 44.500V17Z"/>
            <g fill="none" stroke="#d0c6c5" stroke-width="2"><path d="M3 26H13Q15 26 15 28V32Q15 34 13 34H3M15 30C24 30 20 22 28 22M15 30C28 30 26 38 40 38.500"/><rect x="28" y="18" width="18" height="8" rx="2"/><path d="M53 34H43Q41 34 41 36V39Q41 41 43 41H53"/></g></svg>
          <span>Node-RED</span>
        </div>
        <button class="deploy"><svg width="55" height="38" viewBox="0 0 55 38" fill="#8f8f8f"><path d="M0 11H20V21H0ZM34 1H54V11H34ZM34 27H54V37H34Z"/><path fill="none" stroke="#8f8f8f" stroke-width="3" d="M20 16C29 16 25 6 34 6"/></svg>Развернуть${caret()}</button>
        <button class="menu" aria-label="Меню"><svg width="34" height="30" viewBox="0 0 34 30" fill="#cdcdcd"><rect width="34" height="6" rx="1"/><rect y="12" width="34" height="6" rx="1"/><rect y="24" width="34" height="6" rx="1"/></svg></button>
      </header>
      <main>
        <node-palette></node-palette>
        <flow-workspace></flow-workspace>
        <div class="split left"><i></i></div>
        <edit-tray></edit-tray>
        <div class="split"><i></i></div>
        <debug-sidebar></debug-sidebar>
      </main>`;
  }
}
